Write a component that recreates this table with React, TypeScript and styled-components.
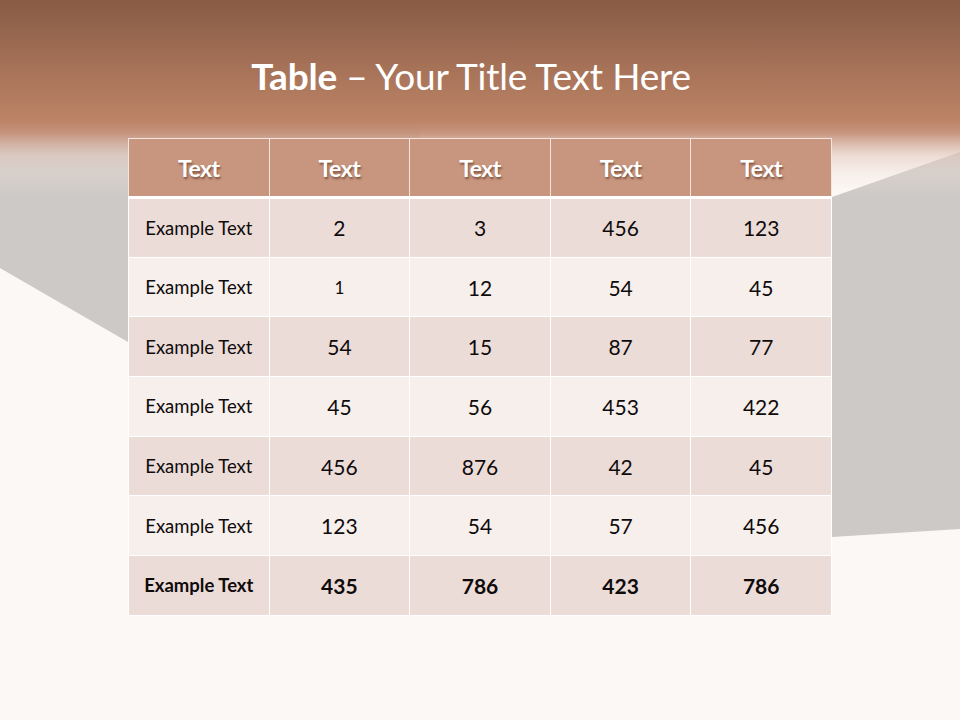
import styled, { createGlobalStyle } from 'styled-components';

const GlobalStyle = createGlobalStyle`
  html, body {
    margin: 0;
    padding: 0;
    background: #fcf8f5;
  }
  * {
    box-sizing: border-box;
  }
`;

const Slide = styled.div`
  position: relative;
  width: 960px;
  height: 720px;
  overflow: hidden;
  font-family: Lato, 'Open Sans', sans-serif;
  background: #fcf8f5;
`;

const Backdrop = styled.svg`
  position: absolute;
  left: 0;
  top: 0;
  width: 960px;
  height: 720px;
`;

const Content = styled.div`
  position: relative;
  display: flex;
  flex-direction: column;
  align-items: center;
  padding-top: 52px;
`;

const Title = styled.h1`
  margin: 0 18px 0 0;
  height: 86px;
  font-size: 37px;
  line-height: 48px;
  font-weight: 400;
  color: #ffffff;
  letter-spacing: -0.2px;

  b {
    font-weight: 700;
  }
`;

const Grid = styled.table`
  width: 704px;
  border-collapse: collapse;
  table-layout: fixed;
  color: #0f0b0b;
`;

const HeadCell = styled.th`
  height: 59px;
  border: 1px solid #f4e6df;
  border-bottom: 3px solid #ffffff;
  background: #c8957e;
  color: #ffffff;
  font-size: 23px;
  font-weight: 700;
  letter-spacing: -0.5px;
  text-shadow: 1px 2px 2px rgba(70, 35, 20, 0.55);
`;

const Row = styled.tr<{ $odd: boolean }>`
  background: ${p => (p.$odd ? '#ebdcd8' : '#f6efec')};
`;

const Cell = styled.td<{ $label?: boolean; $bold?: boolean; $small?: boolean }>`
  height: 59.7px;
  border: 1px solid #ffffff;
  text-align: center;
  font-size: ${p => (p.$label ? '18.5px' : p.$small ? '17px' : '21px')};
  font-weight: ${p => (p.$bold ? 700 : 400)};
`;

const header = ['Text', 'Text', 'Text', 'Text', 'Text'];

const rows: string[][] = [
  ['2', '3', '456', '123'],
  ['1', '12', '54', '45'],
  ['54', '15', '87', '77'],
  ['45', '56', '453', '422'],
  ['456', '876', '42', '45'],
  ['123', '54', '57', '456'],
  ['435', '786', '423', '786'],
];

const App: React.FC = () => {
  return (
    <Slide>
      <GlobalStyle />
      <Backdrop viewBox="0 0 960 720">
        <defs>
          <linearGradient id="topFade" x1="0" y1="0" x2="0" y2="1">
            <stop offset="0" stopColor="#885b45" />
            <stop offset="0.62" stopColor="#bd8467" />
            <stop offset="0.68" stopColor="#c48f77" stopOpacity="0.95" />
            <stop offset="0.8" stopColor="#e2c9bd" stopOpacity="0.6" />
            <stop offset="1" stopColor="#f6eeea" stopOpacity="0" />
          </linearGradient>
        </defs>
        <rect x="0" y="0" width="960" height="720" fill="#fcf8f5" />
        <path d="M0,120 L420,120 L420,360 L128,342 L50,297 L0,268 Z" fill="#cdc9c6" />
        <path d="M600,250 L832,197 L960,152 L960,529 L832,537 L600,540 Z" fill="#cdc9c6" />
        <rect x="0" y="0" width="960" height="195" fill="url(#topFade)" />
      </Backdrop>
      <Content>
        <Title>
          <b>Table</b> – Your Title Text Here
        </Title>
        <Grid>
          <thead>
            <tr>
              {header.map((h, i) => (
                <HeadCell key={i}>{h}</HeadCell>
              ))}
            </tr>
          </thead>
          <tbody>
            {rows.map((r, i) => {
              const last = i === rows.length - 1;
              return (
                <Row key={i} $odd={i % 2 === 0}>
                  <Cell $label $bold={last}>
                    Example Text
                  </Cell>
                  {r.map((v, j) => (
                    <Cell key={j} $bold={last} $small={i === 1 && j === 0}>
                      {v}
                    </Cell>
                  ))}
                </Row>
              );
            })}
          </tbody>
        </Grid>
      </Content>
    </Slide>
  );
};

export default App;
